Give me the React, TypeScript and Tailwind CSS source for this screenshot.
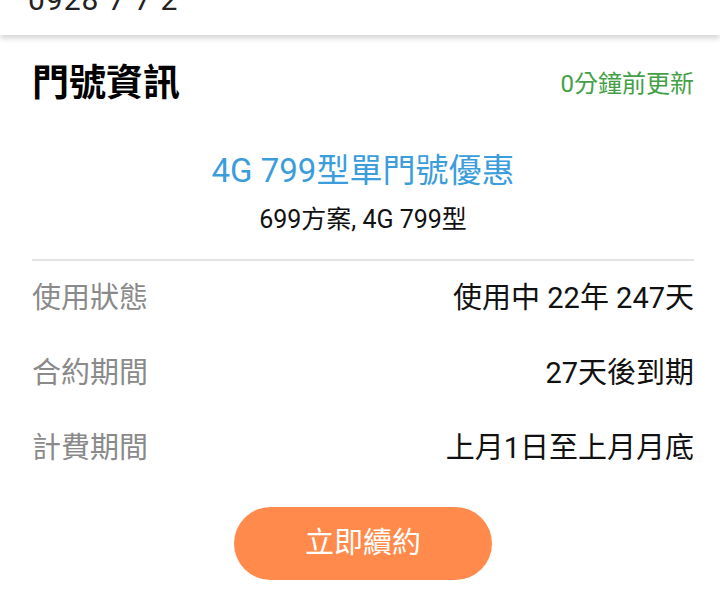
const font = { fontFamily: '"Roboto", "Noto Sans CJK TC", sans-serif' };

const rows = [
  { label: "使用狀態", value: "使用中 22年 247天" },
  { label: "合約期間", value: "27天後到期" },
  { label: "計費期間", value: "上月1日至上月月底" },
];

export default function App() {
  return (
    <div className="w-[720px] h-[608px] overflow-hidden bg-white" style={font}>
      {/* previous card, cut off at top */}
      <div className="relative z-10 h-[35px] overflow-hidden bg-white shadow-[0_3px_6px_rgba(0,0,0,0.18)]">
        <p className="-mt-[20px] pl-[28px] text-[30px] leading-[40px] tracking-[1px] text-[#222]">0928 7 7 2</p>
      </div>

      <div className="pl-[32px] pr-[26px] pt-[27px]">
        <div className="flex items-center justify-between h-[44px]">
          <h1 className="text-[37px] font-bold text-black">門號資訊</h1>
          <span className="text-[24px] text-[#43a047]">0分鐘前更新</span>
        </div>

        <div className="mt-[44px] flex flex-col items-center">
          <h2 className="text-[33px] leading-[42px] text-[#3b9ddb]">4G 799型單門號優惠</h2>
          <p className="mt-[13px] text-[25px] leading-[30px] text-[#111]">699方案, 4G 799型</p>
        </div>

        <div className="mt-[24px] h-[2px] bg-[#e4e4e4]" />

        <div className="flex flex-col">
          {rows.map((r) => (
            <div key={r.label} className="flex items-center justify-between h-[75px]">
              <span className="text-[29px] text-[#8a8a8a]">{r.label}</span>
              <span className="text-[29px] text-[#111]">{r.value}</span>
            </div>
          ))}
        </div>

        <div className="mt-[21px] flex justify-center">
          <button className="w-[258px] h-[73px] rounded-full bg-[#ff8a4c] text-white text-[29px]">
            立即續約
          </button>
        </div>
      </div>
    </div>
  );
}
